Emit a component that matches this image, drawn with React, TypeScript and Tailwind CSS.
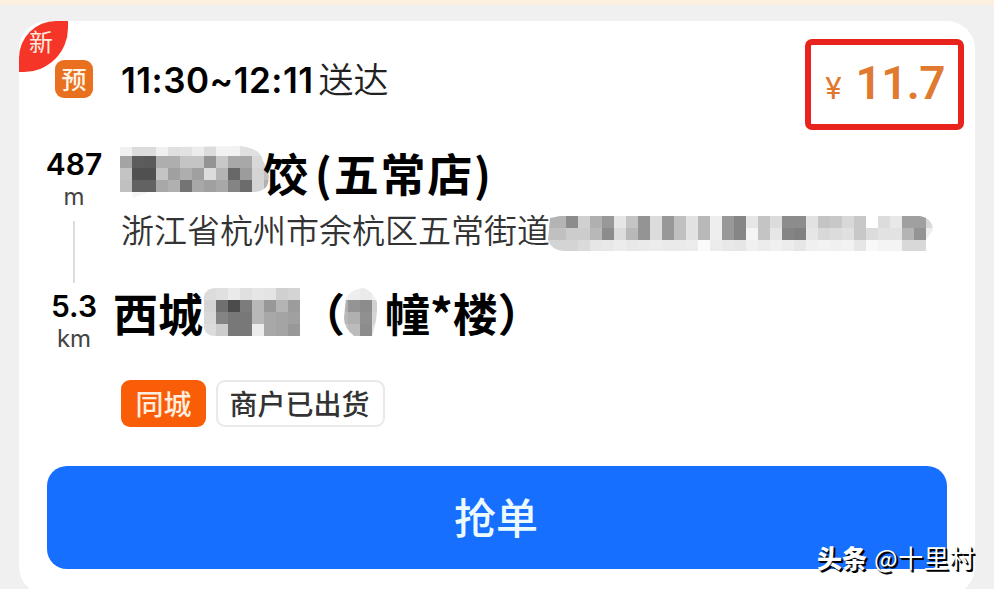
const CELL = 12;

type MosaicProps = {
  rows: string[];
  cols: number;
  clip: string;
  id: string;
};

// two hex digits per cell, one string per row
function Mosaic({ rows, cols, clip, id }: MosaicProps) {
  return (
    <svg
      width={cols * CELL}
      height={rows.length * CELL}
      className="block shrink-0"
      shapeRendering="crispEdges"
      aria-hidden="true"
    >
      <clipPath id={id}>
        <path d={clip} />
      </clipPath>
      <g clipPath={`url(#${id})`}>
        {rows.map((row, y) =>
          row.split(" ").map((v, x) => (
            <rect
              key={`${x}-${y}`}
              x={x * CELL}
              y={y * CELL}
              width={CELL}
              height={CELL}
              fill={`#${v}${v}${v}`}
            />
          ))
        )}
      </g>
    </svg>
  );
}

const shopMosaic = [
  "f0 dc dc f0 e0 e2 ec dc f2 f2 e0 e0 f0",
  "a4 5c 5a ae ae c4 c4 94 c8 a8 a8 d8 dc",
  "c4 50 50 c4 a0 ae a0 dc b4 68 9c d4 c0",
  "c0 62 62 a8 b0 74 a8 a0 a8 84 6c d4 b0",
  "ff f6 f0 fa fa fa fa fa fa fa fa fa ff",
];

const addressMosaic = [
  "b4 b4 8c d0 b0 98 e6 c4 94 dc 98 c0 e2 b8 ee 98 86 e6 c4 dc 8c 8c e2 c4 c8 d8 c8 ff dc e8 a0 a0 d8",
  "c0 c0 cc cc b8 8c dc b8 94 dc 98 c0 e2 b8 ee 98 86 f4 c4 e6 84 80 e6 d8 dc e0 c8 dc e2 e2 b4 94 ee",
  "d4 d4 d4 da e6 e8 ec e8 ea ec ea ea ec fa ec e8 e6 f0 ec f0 ec e6 f0 f2 f0 f2 e6 f8 f4 f4 d8 d8 fa",
];

const buildingMosaic = [
  "dc e0 ea e0 e6 e4 d0 d4",
  "d4 70 4c 7c b8 98 b4 9c",
  "d8 84 78 78 b8 a8 a4 a0",
  "dc cc 78 78 ec a8 a4 98",
];

const unitMosaic = ["f0 ee ea f2", "b0 94 8c d0", "b8 b0 90 d4", "c4 bc 8c e0"];

function Distance({ value, unit }: { value: string; unit: string }) {
  return (
    <div className="flex flex-col items-center">
      <span className="font-[Inter] text-[30px] leading-[34px] font-semibold text-black">{value}</span>
      <span className="mt-px font-[Inter] text-[24px] leading-[29px] text-[#444]">{unit}</span>
    </div>
  );
}

export default function App() {
  return (
    <div className="relative h-[589px] w-[994px] overflow-hidden border-t-[5px] border-[#fdf0e0] bg-[#f0f0f1] pt-[16px] pl-[19px] font-['Noto_Sans_CJK_SC',sans-serif]">
      <div className="relative h-[574px] w-[956px] rounded-[28px] bg-white">
        <div className="absolute top-0 left-0 flex h-[51px] w-[49px] items-center justify-center rounded-tl-[37px] rounded-br-[44px] bg-[#f53528] pr-[5px] pb-[11px] text-[24px] leading-none text-[#ffe9df]">
          新
        </div>

        <header className="flex h-[117px] items-start pt-[18px] pr-[11px] pl-[36px]">
          <span className="mt-[21px] flex size-[38px] items-center justify-center rounded-[9px] bg-[#e8701f] pb-px text-[25px] leading-none font-medium text-[#fff3e4]">
            预
          </span>
          <span className="mt-[20px] ml-[28px] font-[Inter] text-[35px] leading-[42px] font-semibold tracking-[0.5px] text-black">
            11:30~12:11
          </span>
          <span className="mt-[18px] ml-[5px] text-[35px] leading-[42px] font-[350] text-[#222]">送达</span>
          <div className="ml-auto flex h-[91px] w-[159px] items-baseline justify-end rounded-[7px] border-[6px] border-[#e8231d] pt-[8px] pr-[13px] font-[Roboto] text-[#e07a30]">
            <span className="text-[31px]">¥</span>
            <span className="ml-[14px] text-[46px] leading-[60px] font-semibold tracking-[-0.6px]">11.7</span>
          </div>
        </header>

        <main className="flex pl-[27px]">
          <div className="flex w-[56px] flex-col items-center pt-[9px]">
            <Distance value="487" unit="m" />
            <div className="mt-[10px] mb-[6px] h-[62px] w-[2px] bg-[#ddd]" />
            <Distance value="5.3" unit="km" />
          </div>

          <div className="pl-[12px]">
            <div className="flex h-[66px] items-start pt-[6px] pl-[6px]">
              <Mosaic
                id="shop"
                rows={shopMosaic}
                cols={13}
                clip="M0 3H60L120 2Q141 4 143 17Q152 30 147 42Q143 48 132 48H28L14 54L10 48H0Z"
              />
              <h2 className="-mt-px -ml-[13px] text-[45px] leading-[60px] font-bold tracking-[1.8px] whitespace-pre text-black [word-spacing:-7px]">
                饺 (五常店)
              </h2>
            </div>
            <div className="flex h-[74px] items-start pl-[7px] text-[33px] leading-[50px] font-[350] text-[#333]">
              浙江省杭州市余杭区五常街道
              <div className="mt-[12px] -ml-[8px]">
                <Mosaic id="address" rows={addressMosaic} cols={33} clip="M8 2L18 0H378Q390 2 391 14L384 24L384 35H22Q10 35 6 24Z" />
              </div>
            </div>
            <div className="flex h-[102px] items-start pt-[5px] text-[45px] leading-[60px] font-bold text-black">
              <span className="-ml-px">西城</span>
              <div className="mt-[5px] ml-px">
                <Mosaic id="building" rows={buildingMosaic} cols={8} clip="M0 8Q2 0 12 0H96V48H12Q0 48 0 38Z" />
              </div>
              <span>（</span>
              <div className="mt-[5px] -ml-[9px]">
                <Mosaic id="unit" rows={unitMosaic} cols={4} clip="M10 10Q16 0 28 0Q38 4 41 14Q42 30 36 48H18Q8 40 8 30Z" />
              </div>
              <span className="ml-px">幢*楼）</span>
            </div>
            <div className="flex gap-[10px] pl-[7px] text-[28px] leading-none">
              <span className="flex h-[47px] w-[85px] items-center justify-center rounded-[9px] bg-[#f95d08] pb-[2px] font-medium text-[#ffeede]">
                同城
              </span>
              <span className="flex h-[47px] w-[169px] items-center justify-center rounded-[9px] border-2 border-[#e9e9e9] pr-[2px] pb-[2px] font-medium text-[#333]">
                商户已出货
              </span>
            </div>
          </div>
        </main>

        <button className="absolute top-[445px] left-[28px] flex h-[103px] w-[900px] items-center justify-center rounded-[20px] bg-[#176fff] pr-[2px] pb-[4px] text-[42px] font-medium text-[#ebfaff]">
          抢单
        </button>
      </div>

      <div className="absolute top-[532px] left-[817px] flex items-center gap-[7px] text-[25px] leading-[40px] whitespace-nowrap text-white [text-shadow:1px_1px_1px_#000,2px_2px_0_#000]">
        <span className="font-black">头条</span>
        <span className="tracking-[0.6px]">@十里村</span>
      </div>
    </div>
  );
}
